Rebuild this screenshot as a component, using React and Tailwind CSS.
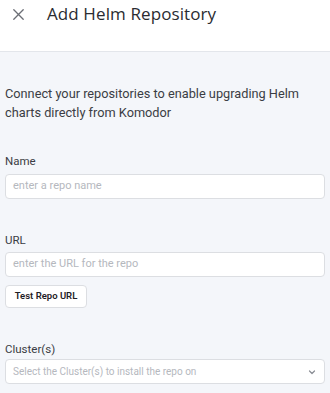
import React from "react";

function Chevron() {
  return (
    <svg width="10" height="10" viewBox="0 0 10 10" fill="none">
      <path d="M2.5 4 L5 6.5 L7.5 4" stroke="#8a8d94" strokeWidth="1.2" strokeLinecap="round" strokeLinejoin="round" />
    </svg>
  );
}

export default function App() {
  return (
    <div className="w-[330px] h-[393px] overflow-hidden bg-[#f4f6fa] flex flex-col" style={{ fontFamily: "Roboto, 'Liberation Sans', sans-serif" }}>
      <div className="h-[52px] bg-white border-b border-[#e3e6eb] flex items-start pt-[3px] shrink-0">
        <div className="w-[36px] h-[22px] flex items-center justify-center">
          <svg width="11" height="11" viewBox="0 0 11 11" className="ml-[1px]">
            <path d="M0.8 0.8 L10.2 10.2 M10.2 0.8 L0.8 10.2" stroke="#6b6e75" strokeWidth="1.3" strokeLinecap="round" />
          </svg>
        </div>
        <div className="ml-[11px] text-[17px] leading-[21px] font-medium text-[#2a2c31] tracking-[0.1px]" style={{ fontFamily: "'Open Sans', sans-serif" }}>
          Add Helm Repository
        </div>
      </div>
      <div className="px-[5px] pt-[32px] flex flex-col">
        <p className="text-[12.75px] leading-[19px] text-[#3b3d44]">
          Connect your repositories to enable upgrading Helm charts directly from Komodor
        </p>
        <label className="mt-[32px] text-[11.5px] leading-[14px] text-[#3b3d44]">Name</label>
        <div className="mt-[6px] h-[25px] bg-white border border-[#dcdee2] rounded-[4px] flex items-center pl-[7px] text-[11px] text-[#b5b8be]">
          enter a repo name
        </div>
        <label className="mt-[34px] text-[11.5px] leading-[14px] text-[#3b3d44]">URL</label>
        <div className="mt-[5px] h-[25px] bg-white border border-[#dcdee2] rounded-[4px] flex items-center pl-[7px] text-[11px] text-[#b5b8be]">
          enter the URL for the repo
        </div>
        <button className="mt-[8px] w-[82px] h-[23px] bg-white border border-[#dcdee2] rounded-[4px] text-[9.5px] font-semibold text-[#1f2126] flex items-center justify-center">
          Test Repo URL
        </button>
        <label className="mt-[34px] text-[11.5px] leading-[14px] text-[#3b3d44]">Cluster(s)</label>
        <div className="mt-[3px] h-[25px] bg-white border border-[#dcdee2] rounded-[4px] flex items-center justify-between pl-[7px] pr-[7px] text-[10px] text-[#b5b8be]">
          <span>Select the Cluster(s) to install the repo on</span>
          <Chevron />
        </div>
      </div>
    </div>
  );
}
